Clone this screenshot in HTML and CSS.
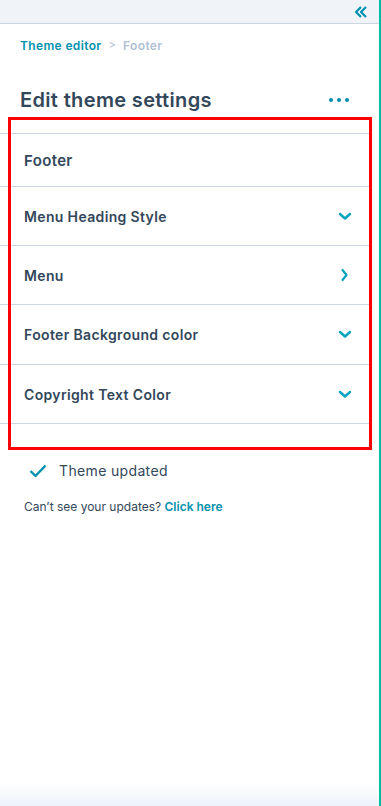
FILE: index.html
```html
<!DOCTYPE html>
<html lang="en">
<head>
  <meta charset="UTF-8">
  <title>Edit theme settings</title>
  <meta name="viewport" content="width=device-width, initial-scale=1.0">
  <link rel="stylesheet" href="styles.css">
</head>
<body>
  <div class="panel">
    <!-- top bar -->
    <div class="topbar">
      <svg class="collapse" width="14" height="12" viewBox="0 0 14 12">
        <path d="M7 1 L2 6 L7 11 M12 1 L7 6 L12 11" fill="none" stroke="#0091ae" stroke-width="2.2" stroke-linejoin="round"/>
      </svg>
    </div>

    <div class="crumbs">
      <a class="crumb-link">Theme editor</a>
      <span class="crumb-sep">&gt;</span>
      <span class="crumb-here">Footer</span>
    </div>

    <div class="title-row">
      <h1>Edit theme settings</h1>
      <span class="dots"><i></i><i></i><i></i></span>
    </div>

    <!-- settings list -->
    <div class="settings">
      <div class="group-title">Footer</div>
      <div class="row">
        <span>Menu Heading Style</span>
        <svg width="14" height="9" viewBox="0 0 14 9"><path d="M2 2 L7 6.5 L12 2" fill="none" stroke="#00a4bd" stroke-width="2.4" stroke-linecap="round" stroke-linejoin="round"/></svg>
      </div>
      <div class="row">
        <span>Menu</span>
        <svg class="right" width="9" height="14" viewBox="0 0 9 14"><path d="M2.5 2 L6.5 7 L2.5 12" fill="none" stroke="#00a4bd" stroke-width="2.2" stroke-linecap="round" stroke-linejoin="round"/></svg>
      </div>
      <div class="row tall">
        <span>Footer Background color</span>
        <svg width="14" height="9" viewBox="0 0 14 9"><path d="M2 2 L7 6.5 L12 2" fill="none" stroke="#00a4bd" stroke-width="2.4" stroke-linecap="round" stroke-linejoin="round"/></svg>
      </div>
      <div class="row">
        <span>Copyright Text Color</span>
        <svg width="14" height="9" viewBox="0 0 14 9"><path d="M2 2 L7 6.5 L12 2" fill="none" stroke="#00a4bd" stroke-width="2.4" stroke-linecap="round" stroke-linejoin="round"/></svg>
      </div>
    </div>

    <div class="status">
      <svg width="18" height="14" viewBox="0 0 18 14"><path d="M1.5 7 L6.5 12 L16.5 1.5" fill="none" stroke="#0091ae" stroke-width="2.4" stroke-linejoin="round"/></svg>
      <span>Theme updated</span>
    </div>
    <p class="hint">Can’t see your updates? <a>Click here</a></p>

    <div class="fade"></div>
    <div class="highlight"></div>
  </div>
</body>
</html>
```
FILE: styles.css
```css
* { box-sizing: border-box; }

body {
  margin: 0;
  font-family: Inter, 'Noto Sans', sans-serif;
  color: #33475b;
  background: #fff;
  letter-spacing: 0.35px;
}

.panel {
  position: relative;
  width: 381px;
  height: 806px;
  border-right: 2px solid #00bda5;
  overflow: hidden;
}

.topbar {
  height: 24px;
  background: #f0f3f7;
  border-bottom: 1px solid #cbd6e2;
  display: flex;
  justify-content: flex-end;
  align-items: center;
  padding-right: 11px;
}

.collapse { display: block; }

.crumbs {
  padding: 4px 20px 0;
  font-size: 12px;
  font-weight: 600;
  display: flex;
  gap: 7px;
  height: 38px;
  align-items: center;
}

.crumb-link { color: #0091ae; }
.crumb-sep { color: #b0c1d4; font-weight: 400; font-size: 11px; }
.crumb-here { color: #b0c1d4; }

.title-row {
  display: flex;
  justify-content: space-between;
  align-items: center;
  padding: 5px 30px 0 20px;
  height: 71px;
}

h1 {
  margin: 0;
  font-size: 20px;
  font-weight: 600;
  color: #33475b;
}

.dots { display: flex; gap: 4px; }
.dots i {
  width: 4px;
  height: 4px;
  border-radius: 50%;
  background: #0091ae;
}

.settings {
  margin-right: 9px;
  border-top: 1px solid #cbd6e2;
}

.group-title {
  height: 53px;
  display: flex;
  align-items: center;
  padding-left: 24px;
  font-size: 15px;
  font-weight: 600;
  border-bottom: 1px solid #cbd6e2;
}

.row {
  height: 59px;
  display: flex;
  justify-content: space-between;
  align-items: center;
  padding: 0 18px 0 24px;
  font-size: 14px;
  font-weight: 600;
  border-bottom: 1px solid #cbd6e2;
}

.row.tall { height: 60px; }

.row svg { display: block; }
.row svg.right { margin-right: 3px; }

.status {
  margin-top: 38px;
  display: flex;
  align-items: center;
  gap: 12px;
  padding-left: 29px;
  font-size: 14px;
}

.hint {
  margin: 20px 0 0 24px;
  font-size: 12px;
  letter-spacing: 0;
}

.hint a {
  color: #0091ae;
  font-weight: 600;
}

.fade {
  position: absolute;
  left: 0;
  right: 0;
  bottom: 0;
  height: 24px;
  background: linear-gradient(to bottom, rgba(240,245,250,0), #eef3f9);
}

/* red annotation box */
.highlight {
  position: absolute;
  left: 8px;
  top: 117px;
  width: 364px;
  height: 333px;
  border: 3px solid #ff0000;
}
```
